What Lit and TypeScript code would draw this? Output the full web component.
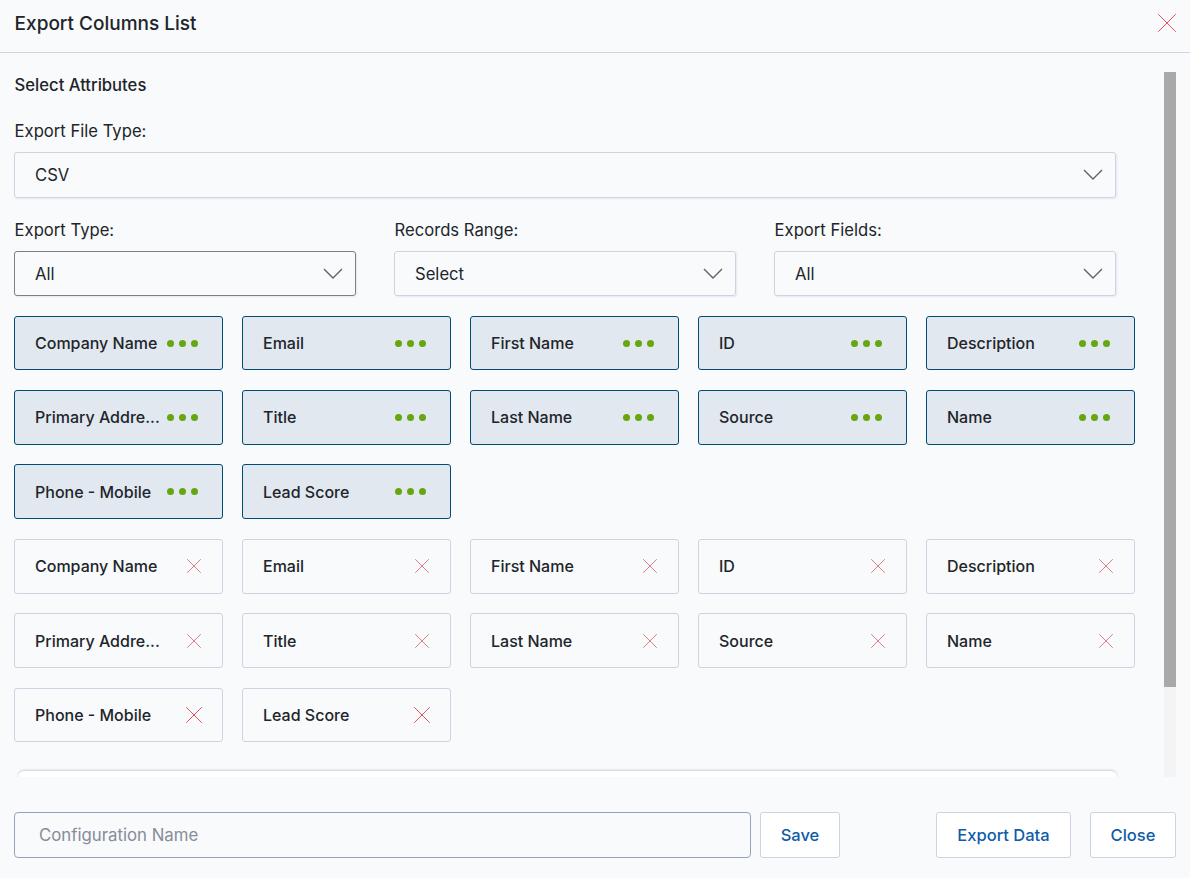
import { LitElement, html, css, svg } from 'lit';
import { customElement } from 'lit/decorators.js';

const COLUMNS = [
  'Company Name', 'Email', 'First Name', 'ID', 'Description',
  'Primary Address', 'Title', 'Last Name', 'Source', 'Name',
  'Phone - Mobile', 'Lead Score',
];

const cross = (size: number, color = '#e8414c') => html`<svg class="cross s${size}" width=${size} height=${size} viewBox="0 0 ${size} ${size}">
  ${svg`<path d="M0.2 0.2L${size - 0.2} ${size - 0.2}M${size - 0.2} 0.2L0.2 ${size - 0.2}" stroke=${color} stroke-width="0.9" fill="none"/>`}
</svg>`;

const chevron = html`<svg class="chev" width="20" height="12" viewBox="0 0 20 12">
  <path d="M1 1L10 10L19 1" stroke="#5f6368" stroke-width="1.4" fill="none"/>
</svg>`;

@customElement('app-root')
export class AppRoot extends LitElement {
  static styles = css`
    :host {
      display: block;
      width: 1190px;
      height: 878px;
      background: #f8fafc;
      color: #212529;
      font-family: Inter, "Liberation Sans", sans-serif;
      font-size: 16.64px;
      overflow: hidden;
    }
    * { box-sizing: border-box; }

    .header {
      height: 53px;
      display: flex;
      align-items: center;
      justify-content: space-between;
      padding: 0 14px 6px;
      border-bottom: 1px solid #cbd5e1;
    }
    .title { font-size: 19px; font-weight: 500; padding-left: 0.6px; }

    .scroll {
      height: 724px;
      display: flex;
      padding: 19px 14px 0;
      overflow: hidden;
    }
    .content { width: 1121px; flex: none; }
    .section { font-weight: 500; line-height: 26px; margin-bottom: 20px; padding-left: 0.6px; }
    label { display: block; line-height: 26px; margin-bottom: 8px; padding-left: 0.6px; }

    .select {
      height: 46px;
      display: flex;
      align-items: center;
      justify-content: space-between;
      padding: 0 12px 0 20px;
      border: 1px solid #cbd5e1;
      border-radius: 3px;
      box-shadow: 1px 1px 2px rgba(148, 163, 184, 0.2);
    }
    .select.wide { width: 1102px; }
    .select.active { border-color: #7b8087; height: 45px; }
    .select.short { height: 45px; }

    .row3 {
      width: 1102px;
      display: grid;
      grid-template-columns: repeat(3, 342px);
      gap: 38px;
      margin-top: 19px;
    }

    .grid {
      display: grid;
      grid-template-columns: repeat(5, 209px);
      column-gap: 19px;
      row-gap: 19.5px;
      margin-top: 19.6px;
    }
    .grid.second { margin-top: 19.5px; }
    .card {
      height: 54.9px;
      display: flex;
      align-items: center;
      justify-content: space-between;
      padding: 0 24px 0 20px;
      border: 1px solid #cbd5e1;
      border-radius: 3px;
      font-size: 16px;
      font-weight: 500;
    }
    .card.on { background: #e2e8f0; border-color: #004b73; }
    .name { white-space: nowrap; }
    .dots { display: flex; gap: 5px; flex: none; }
    .dots i { width: 7px; height: 7px; border-radius: 50%; background: #66a60f; }
    .card .cross { margin-right: -3px; flex: none; }
    .card .cross.s16 { margin-right: -4px; }

    .stub {
      margin: 29px 0 0 4px;
      width: 1099px;
      height: 40px;
      background: #fff;
      border-radius: 6px;
      box-shadow: 0 -1px 2px rgba(100, 116, 139, 0.3);
    }

    .bar {
      width: 12px;
      height: 705px;
      flex: none;
      margin-left: 29px;
      background: #f4f4f5;
    }
    .thumb { height: 615px; background: #a9a9a9; }

    .footer {
      display: flex;
      align-items: center;
      padding: 35px 14px 0;
    }
    .config {
      width: 737px;
      height: 46px;
      display: flex;
      align-items: center;
      padding: 0 24px;
      font-size: 16.8px;
      color: #858d98;
      border: 1px solid #94a3b8;
      border-radius: 4px;
    }
    .btn {
      height: 46px;
      display: flex;
      align-items: center;
      justify-content: center;
      background: #fff;
      color: #0f5ca8;
      font-size: 16.5px;
      font-weight: 500;
      border: 1px solid #cbd5e1;
      border-radius: 3px;
    }
    .save { width: 80px; margin-left: 9px; }
    .export { width: 135px; margin-left: auto; }
    .close { width: 86px; margin-left: 19px; }
  `;

  private card(name: string, i: number, on: boolean) {
    const label = name === 'Primary Address' ? 'Primary Addre...' : name;
    return html`<div class="card ${on ? 'on' : ''}">
      <span class="name">${label}</span>
      ${on
        ? html`<span class="dots"><i></i><i></i><i></i></span>`
        : i >= 10 ? cross(16) : cross(14, '#d8737a')}
    </div>`;
  }

  render() {
    return html`
      <div class="header">
        <span class="title">Export Columns List</span>
        ${cross(18)}
      </div>
      <div class="scroll">
        <div class="content">
          <div class="section">Select Attributes</div>
          <label>Export File Type:</label>
          <div class="select wide"><span>CSV</span>${chevron}</div>
          <div class="row3">
            <div>
              <label>Export Type:</label>
              <div class="select active"><span>All</span>${chevron}</div>
            </div>
            <div>
              <label>Records Range:</label>
              <div class="select short"><span>Select</span>${chevron}</div>
            </div>
            <div>
              <label>Export Fields:</label>
              <div class="select short"><span>All</span>${chevron}</div>
            </div>
          </div>
          <div class="grid">${COLUMNS.map((c, i) => this.card(c, i, true))}</div>
          <div class="grid second">${COLUMNS.map((c, i) => this.card(c, i, false))}</div>
          <div class="stub"></div>
        </div>
        <div class="bar"><div class="thumb"></div></div>
      </div>
      <div class="footer">
        <div class="config">Configuration Name</div>
        <div class="btn save">Save</div>
        <div class="btn export">Export Data</div>
        <div class="btn close">Close</div>
      </div>
    `;
  }
}
